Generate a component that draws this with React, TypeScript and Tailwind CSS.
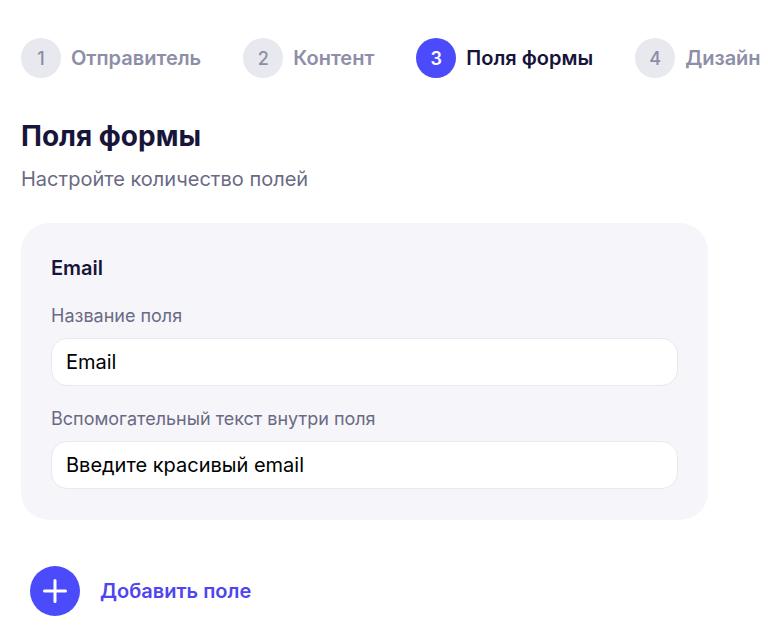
import { Plus } from 'lucide-react';

const steps = [
  { n: 1, label: 'Отправитель' },
  { n: 2, label: 'Контент' },
  { n: 3, label: 'Поля формы', active: true },
  { n: 4, label: 'Дизайн' },
];

function Stepper() {
  return (
    <div className="flex items-center gap-[42px] whitespace-nowrap">
      {steps.map((s) => (
        <div key={s.n} className="flex items-center gap-[10px] shrink-0">
          <div
            className={
              s.active
                ? 'w-10 h-10 rounded-full flex items-center justify-center bg-[#4b4bfb] text-white text-[18px] font-semibold'
                : 'w-10 h-10 rounded-full flex items-center justify-center bg-[#e8e8ef] text-[#8c8ca6] text-[18px] font-medium'
            }
          >
            {s.n}
          </div>
          <span
            className={
              s.active
                ? 'text-[20px] font-semibold text-[#16143a]'
                : 'text-[20px] font-semibold text-[#8e8ea8]'
            }
          >
            {s.label}
          </span>
        </div>
      ))}
    </div>
  );
}

function Field({ label, value }: { label: string; value: string }) {
  return (
    <div className="flex flex-col gap-[11px]">
      <label className="text-[18px] leading-[22px] text-[#6a6a84]">{label}</label>
      <input
        readOnly
        value={value}
        className="h-[48px] w-full rounded-[16px] border border-[#e8e8ef] bg-white px-[14px] text-[20px] text-black outline-none"
      />
    </div>
  );
}

export default function App() {
  return (
    <div
      className="min-h-[625px] w-[768px] overflow-hidden bg-white pl-[21px] pt-[38px]"
      style={{ fontFamily: 'Inter, "Noto Sans", sans-serif' }}
    >
      <Stepper />

      <h1 className="mt-[41px] text-[28px] leading-[34px] font-bold text-[#17153a]">Поля формы</h1>
      <p className="mt-[14px] text-[20px] leading-[24px] text-[#6a6a84]">Настройте количество полей</p>

      <div className="mt-[32px] w-[687px] rounded-[28px] bg-[#f6f6fa] px-[30px] pt-[33px] pb-[31px]">
        <h2 className="text-[20px] leading-[24px] font-semibold text-[#17153a]">Email</h2>
        <div className="mt-[25px] flex flex-col gap-[22px]">
          <Field label="Название поля" value="Email" />
          <Field label="Вспомогательный текст внутри поля" value="Введите красивый email" />
        </div>
      </div>

      <button className="mt-[46px] ml-[9px] flex items-center gap-[20px]">
        <span className="w-[50px] h-[50px] rounded-full bg-[#4b4bfb] flex items-center justify-center">
          <Plus size={36} strokeWidth={2} className="text-white" />
        </span>
        <span className="text-[20px] font-semibold text-[#4f45f0]">Добавить поле</span>
      </button>
    </div>
  );
}
